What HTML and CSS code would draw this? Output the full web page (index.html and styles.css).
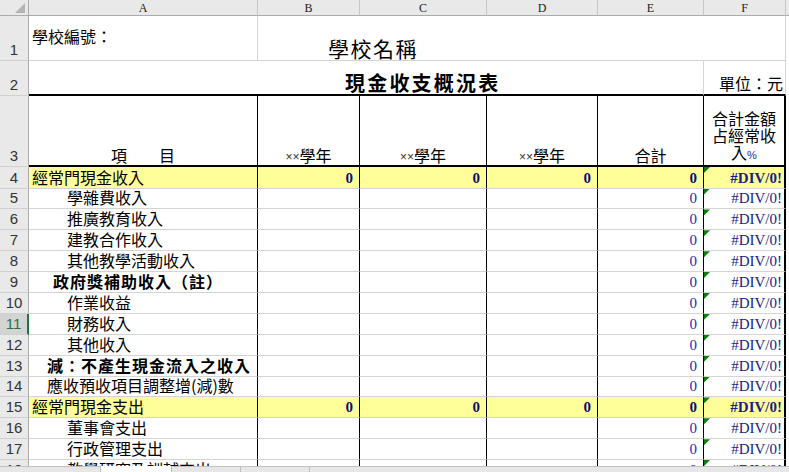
FILE: index.html
```html
<!DOCTYPE html>
<html lang="zh-Hant">
<head>
<meta charset="utf-8">
<title>現金收支概況表</title>
<link rel="stylesheet" href="styles.css">
</head>
<body>
<div class="sheet">
  <div class="row hdr">
    <div class="corner"><svg width="12" height="12" viewBox="0 0 12 12"><polygon points="11,1 11,11 1,11" fill="#b4b4b4"/></svg></div>
    <div class="ch">A</div>
    <div class="ch">B</div>
    <div class="ch">C</div>
    <div class="ch">D</div>
    <div class="ch">E</div>
    <div class="ch">F</div>
    <div class="ch rest"></div>
  </div>

  <div class="row r1">
    <div class="rh">1</div>
    <div class="c g a1">學校編號：</div>
    <div class="c g school">學校名稱</div>
  </div>

  <div class="row r2">
    <div class="rh">2</div>
    <div class="c g title">現金收支概況表</div>
    <div class="c g unit">單位：元</div>
  </div>

  <div class="row r3">
    <div class="rh">3</div>
    <div class="c th">項　　目</div>
    <div class="c th"><span class="xx">××</span>學年</div>
    <div class="c th"><span class="xx">××</span>學年</div>
    <div class="c th"><span class="xx">××</span>學年</div>
    <div class="c th">合計</div>
    <div class="c f th pct"><span class="wrap">合計金額占經常收入<span class="pc">%</span></span></div>
  </div>

  <div class="row r4 hl">
    <div class="rh">4</div>
    <div class="c l0">經常門現金收入</div>
    <div class="c n nb">0</div>
    <div class="c n nb">0</div>
    <div class="c n nb">0</div>
    <div class="c n nb">0</div>
    <div class="c f err eb">#DIV/0!</div>
  </div>

  <div class="row rd">
    <div class="rh">5</div>
    <div class="c l2">學雜費收入</div>
    <div class="c"></div><div class="c"></div><div class="c"></div>
    <div class="c n">0</div>
    <div class="c f err">#DIV/0!</div>
  </div>

  <div class="row rd">
    <div class="rh">6</div>
    <div class="c l2">推廣教育收入</div>
    <div class="c"></div><div class="c"></div><div class="c"></div>
    <div class="c n">0</div>
    <div class="c f err">#DIV/0!</div>
  </div>

  <div class="row rd">
    <div class="rh">7</div>
    <div class="c l2">建教合作收入</div>
    <div class="c"></div><div class="c"></div><div class="c"></div>
    <div class="c n">0</div>
    <div class="c f err">#DIV/0!</div>
  </div>

  <div class="row rd">
    <div class="rh">8</div>
    <div class="c l2">其他教學活動收入</div>
    <div class="c"></div><div class="c"></div><div class="c"></div>
    <div class="c n">0</div>
    <div class="c f err">#DIV/0!</div>
  </div>

  <div class="row rd">
    <div class="rh">9</div>
    <div class="c l1b bold">政府獎補助收入（註）</div>
    <div class="c"></div><div class="c"></div><div class="c"></div>
    <div class="c n">0</div>
    <div class="c f err">#DIV/0!</div>
  </div>

  <div class="row rd">
    <div class="rh">10</div>
    <div class="c l2">作業收益</div>
    <div class="c"></div><div class="c"></div><div class="c"></div>
    <div class="c n">0</div>
    <div class="c f err">#DIV/0!</div>
  </div>

  <div class="row rd">
    <div class="rh sel">11</div>
    <div class="c l2">財務收入</div>
    <div class="c"></div><div class="c"></div><div class="c"></div>
    <div class="c n">0</div>
    <div class="c f err">#DIV/0!</div>
  </div>

  <div class="row rd">
    <div class="rh">12</div>
    <div class="c l2">其他收入</div>
    <div class="c"></div><div class="c"></div><div class="c"></div>
    <div class="c n">0</div>
    <div class="c f err">#DIV/0!</div>
  </div>

  <div class="row rd">
    <div class="rh">13</div>
    <div class="c l1 bold">減：不產生現金流入之收入</div>
    <div class="c"></div><div class="c"></div><div class="c"></div>
    <div class="c n">0</div>
    <div class="c f err">#DIV/0!</div>
  </div>

  <div class="row rd">
    <div class="rh">14</div>
    <div class="c l1">應收預收項目調整增(減)數</div>
    <div class="c"></div><div class="c"></div><div class="c"></div>
    <div class="c n">0</div>
    <div class="c f err">#DIV/0!</div>
  </div>

  <div class="row rd hl">
    <div class="rh">15</div>
    <div class="c l0">經常門現金支出</div>
    <div class="c n nb">0</div>
    <div class="c n nb">0</div>
    <div class="c n nb">0</div>
    <div class="c n nb">0</div>
    <div class="c f err eb">#DIV/0!</div>
  </div>

  <div class="row rd">
    <div class="rh">16</div>
    <div class="c l2">董事會支出</div>
    <div class="c"></div><div class="c"></div><div class="c"></div>
    <div class="c n">0</div>
    <div class="c f err">#DIV/0!</div>
  </div>

  <div class="row rd">
    <div class="rh">17</div>
    <div class="c l2">行政管理支出</div>
    <div class="c"></div><div class="c"></div><div class="c"></div>
    <div class="c n">0</div>
    <div class="c f err">#DIV/0!</div>
  </div>

  <div class="row rd">
    <div class="rh">18</div>
    <div class="c l2">教學研究及訓輔支出</div>
    <div class="c"></div><div class="c"></div><div class="c"></div>
    <div class="c n">0</div>
    <div class="c f err">#DIV/0!</div>
  </div>
</div>

<div class="tabs">
  <div class="tab-gap"></div>
  <div class="tab active"></div>
  <div class="tab"></div>
  <div class="tab"></div>
  <div class="tab-fill"></div>
</div>
</body>
</html>
```

FILE: styles.css
```css
html, body {
  margin: 0;
  padding: 0;
}

body {
  width: 789px;
  height: 472px;
  overflow: hidden;
  background: #ffffff;
  font-family: "Noto Sans CJK TC", "Noto Sans", sans-serif;
  color: #000;
}

.sheet {
  height: 466px;
  overflow: hidden;
}

.row {
  display: grid;
  grid-template-columns: 29px 229px 102px 127px 111px 106px 82px 1fr;
}

.hdr { height: 16px; }
.r1 { height: 45px; }
.r2 { height: 35px; }
.r3 { height: 71px; }
.r4 { height: 21.5px; }
.rd { height: 20.9px; }

/* headers */
.corner,
.ch,
.rh {
  box-sizing: border-box;
  background: #e9e9e9;
}

.corner {
  border-right: 1px solid #ababab;
  border-bottom: 1px solid #ababab;
  display: flex;
  justify-content: flex-end;
  align-items: flex-end;
  padding: 0 2px 1px 0;
}

.corner svg { display: block; }

.ch {
  border-right: 1px solid #c6c6c6;
  border-bottom: 1px solid #ababab;
  display: flex;
  justify-content: center;
  align-items: center;
  font-family: "Liberation Serif", serif;
  font-size: 12px;
  line-height: 14px;
  color: #222;
}

.ch.rest { border-right: none; }

.rh {
  border-right: 1px solid #ababab;
  border-bottom: 1px solid #d0d0d0;
  display: flex;
  justify-content: center;
  align-items: flex-end;
  padding-bottom: 2px;
  font-family: "Liberation Sans Narrow", "Liberation Sans", sans-serif;
  font-size: 15px;
  line-height: 17px;
  color: #333;
}

.rh.sel {
  background: #d3d3d3;
  color: #217346;
  border-right: 2px solid #217346;
}

/* cells */
.c {
  box-sizing: border-box;
  display: flex;
  align-items: flex-end;
  overflow: hidden;
  white-space: nowrap;
  font-size: 16px;
  line-height: 19px;
  padding-bottom: 1px;
  border-right: 1px solid #000;
  border-bottom: 1px solid #d4d4d4;
}

.c.g { border-right-color: #d4d4d4; }
.c.f { border-right: 2px solid #000; }

.hl .c { background: #ffff99; }

.a1 {
  align-items: flex-start;
  padding: 11px 0 0 3px;
}

.school {
  grid-column: 3 / 8;
  font-size: 21px;
  line-height: 24px;
  letter-spacing: 1.5px;
  padding-left: 70px;
  padding-bottom: 0;
}

.title {
  grid-column: 2 / 7;
  border-bottom: 2px solid #000;
  font-size: 20px;
  line-height: 23px;
  font-weight: bold;
  letter-spacing: 2.2px;
  padding-left: 316px;
  padding-bottom: 0;
}

.unit {
  border-bottom: 2px solid #000;
  justify-content: flex-end;
  padding-right: 2px;
  padding-bottom: 1px;
}

.r3 .c {
  border-bottom: 2px solid #000;
  justify-content: center;
  padding-bottom: 0;
}

.xx {
  font-family: "Liberation Sans", sans-serif;
  font-size: 12px;
  line-height: 14px;
  margin-bottom: 1px;
  color: #333;
}

.pct .wrap {
  white-space: normal;
  width: 66px;
  text-align: center;
  line-height: 17px;
  margin-bottom: 1px;
  word-break: break-all;
}

.pc {
  font-family: "Liberation Sans", sans-serif;
  font-size: 11px;
  color: #2a2a9a;
}

/* indents in column A */
.l0 { padding-left: 3px; }
.l1 { padding-left: 18px; }
.l1b { padding-left: 24px; }
.l2 { padding-left: 38px; }

.bold {
  font-weight: bold;
  letter-spacing: 1px;
}

/* numbers */
.n,
.err {
  justify-content: flex-end;
  font-family: "Liberation Serif", serif;
  font-size: 15px;
  line-height: 17px;
  padding-bottom: 1px;
}

.n {
  padding-right: 6px;
  color: #2828b4;
}

.n.nb {
  font-weight: bold;
  color: #0c0c78;
}

.err {
  position: relative;
  padding-right: 2px;
  color: #1c1c86;
}

.err.eb { font-weight: bold; }

.err::before {
  content: "";
  position: absolute;
  left: 0;
  top: 0;
  width: 6px;
  height: 6px;
  background: #107c10;
  clip-path: polygon(0 0, 100% 0, 0 100%);
}

/* sheet tab strip */
.tabs {
  box-sizing: border-box;
  height: 6px;
  display: flex;
  background: #e6e6e6;
  border-top: 1px solid #c2c2c2;
}

.tab-gap { width: 100px; }

.tab {
  width: 68px;
  border-left: 1px solid #bdbdbd;
}

.tab.active {
  width: 70px;
  background: #ffffff;
  margin-top: -1px;
}

.tab-fill {
  flex: 1;
  border-left: 1px solid #bdbdbd;
}
```
